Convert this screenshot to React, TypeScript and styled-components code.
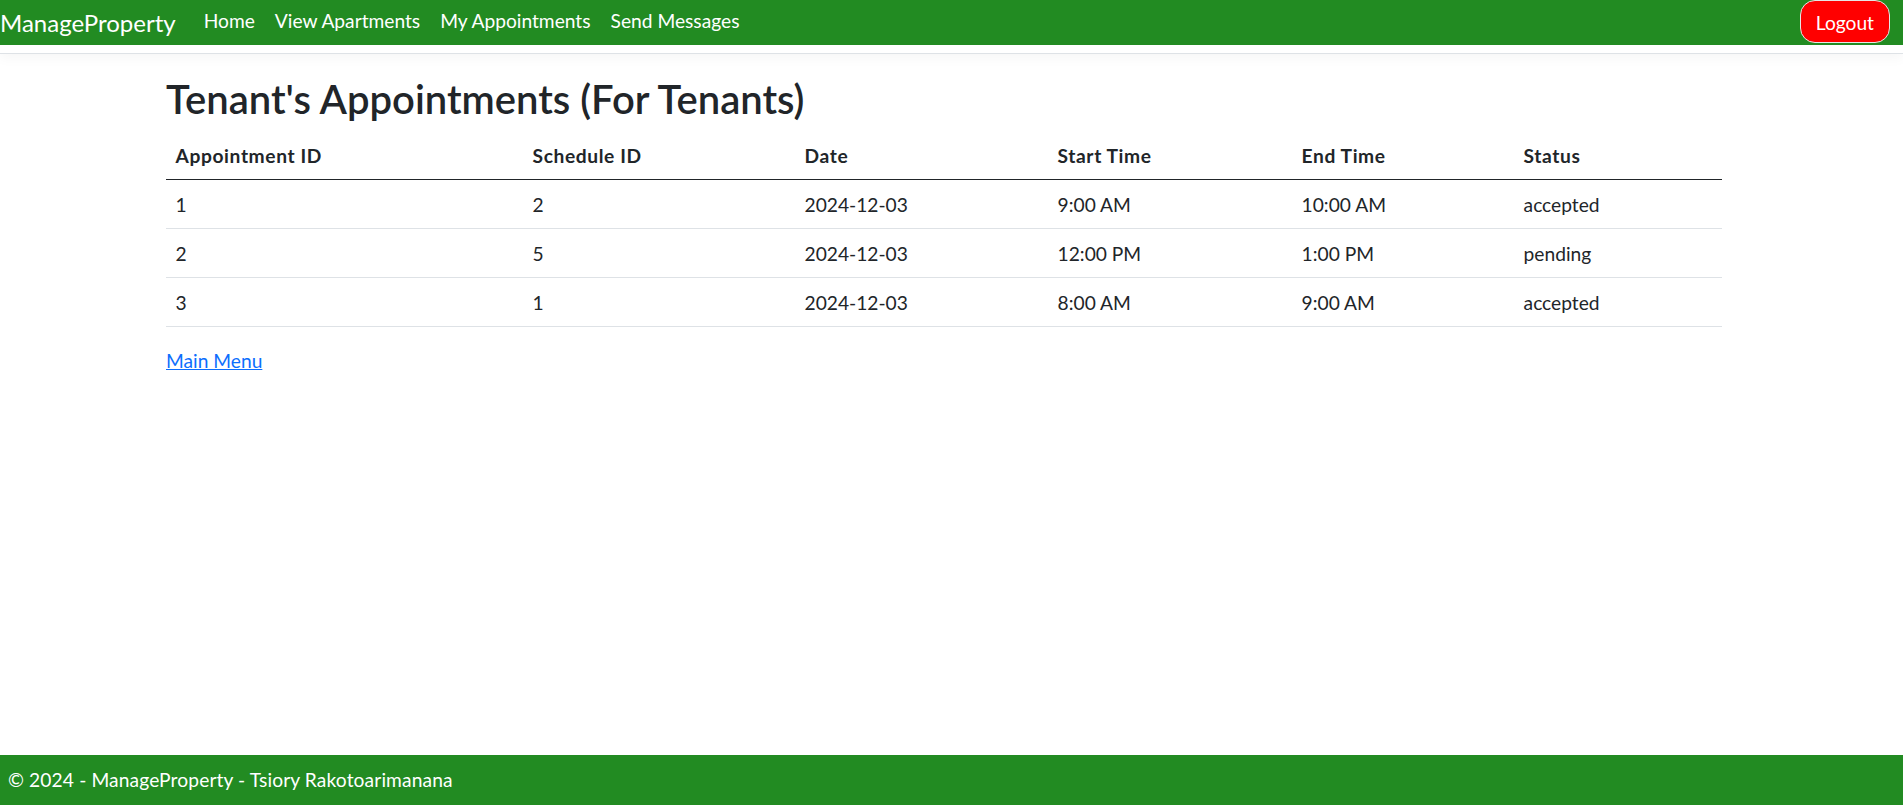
import styled, { createGlobalStyle } from 'styled-components';

const GlobalStyle = createGlobalStyle`
  *, *::before, *::after {
    box-sizing: border-box;
  }

  body {
    margin: 0;
    font-family: Lato, "Noto Sans", "Liberation Sans", sans-serif;
    font-size: 19.2px;
    line-height: 1.5;
    color: #212529;
    background-color: #fff;
  }
`;

const Page = styled.div`
  min-height: 100vh;
  display: flex;
  flex-direction: column;
`;

const Header = styled.header`
  padding-bottom: 8px;
  border-bottom: 1px solid #dee2e6;
  box-shadow: 0 0.25rem 0.75rem rgba(0, 0, 0, 0.04);
  margin-bottom: 17px;
`;

const NavBar = styled.nav`
  height: 45px;
  background-color: #228b22;
  display: flex;
  align-items: center;
  padding-right: 13px;
`;

const Brand = styled.a`
  font-size: 24px;
  line-height: 36px;
  color: #fff;
  text-decoration: none;
  margin-right: 28px;
`;

const NavList = styled.ul`
  list-style: none;
  margin: 0;
  padding: 0;
  display: flex;
  gap: 20px;
  flex: 1;
`;

const NavLink = styled.a`
  font-size: 19.2px;
  line-height: 28.8px;
  color: #fff;
  text-decoration: none;
  display: block;
  padding-bottom: 3px;
`;

const LogoutButton = styled.button`
  align-self: flex-start;
  height: 43px;
  padding: 2px 15px 0;
  font-family: inherit;
  font-size: 19.2px;
  color: #fff;
  background-color: #ff0000;
  border: 1px solid #e6e6e6;
  border-radius: 15px;
  cursor: pointer;
`;

const Main = styled.main`
  flex: 1;
  padding: 0 181px 0 166px;
`;

const Title = styled.h1`
  margin: 4px 0 8px;
  font-size: 40px;
  font-weight: 600;
  line-height: 48px;
`;

const Table = styled.table`
  width: 100%;
  border-collapse: collapse;
  margin-bottom: 20px;
`;

const HeadCell = styled.th<{ $width: number }>`
  width: ${(p) => p.$width}px;
  text-align: left;
  font-weight: 700;
  letter-spacing: 0.6px;
  padding: 10.6px 9.6px 8.6px;
  border-bottom: 1px solid #212529;
`;

const Cell = styled.td`
  padding: 10.6px 9.6px 8.6px;
  border-bottom: 1px solid #dee2e6;
`;

const MenuLink = styled.a`
  color: #0d6efd;
  text-decoration: underline;
`;

const Footer = styled.footer`
  height: 50px;
  line-height: 50px;
  padding: 0 8px;
  background-color: #228b22;
  color: #fff;
  letter-spacing: 0.12px;
  white-space: nowrap;
`;

const columns = [
  { label: 'Appointment ID', width: 357 },
  { label: 'Schedule ID', width: 272 },
  { label: 'Date', width: 253 },
  { label: 'Start Time', width: 244 },
  { label: 'End Time', width: 222 },
  { label: 'Status', width: 208 },
];

const appointments = [
  { id: 1, scheduleId: 2, date: '2024-12-03', start: '9:00 AM', end: '10:00 AM', status: 'accepted' },
  { id: 2, scheduleId: 5, date: '2024-12-03', start: '12:00 PM', end: '1:00 PM', status: 'pending' },
  { id: 3, scheduleId: 1, date: '2024-12-03', start: '8:00 AM', end: '9:00 AM', status: 'accepted' },
];

const navItems = ['Home', 'View Apartments', 'My Appointments', 'Send Messages'];

const App = () => {
  return (
    <Page>
      <GlobalStyle />
      <Header>
        <NavBar>
          <Brand href="#">ManageProperty</Brand>
          <NavList>
            {navItems.map((item) => (
              <li key={item}>
                <NavLink href="#">{item}</NavLink>
              </li>
            ))}
          </NavList>
          <LogoutButton type="button">Logout</LogoutButton>
        </NavBar>
      </Header>
      <Main>
        <Title>Tenant's Appointments (For Tenants)</Title>
        <Table>
          <thead>
            <tr>
              {columns.map((col) => (
                <HeadCell key={col.label} $width={col.width}>
                  {col.label}
                </HeadCell>
              ))}
            </tr>
          </thead>
          <tbody>
            {appointments.map((a) => (
              <tr key={a.id}>
                <Cell>{a.id}</Cell>
                <Cell>{a.scheduleId}</Cell>
                <Cell>{a.date}</Cell>
                <Cell>{a.start}</Cell>
                <Cell>{a.end}</Cell>
                <Cell>{a.status}</Cell>
              </tr>
            ))}
          </tbody>
        </Table>
        <MenuLink href="#">Main Menu</MenuLink>
      </Main>
      <Footer>&copy; 2024 - ManageProperty - Tsiory Rakotoarimanana</Footer>
    </Page>
  );
};

export default App;
